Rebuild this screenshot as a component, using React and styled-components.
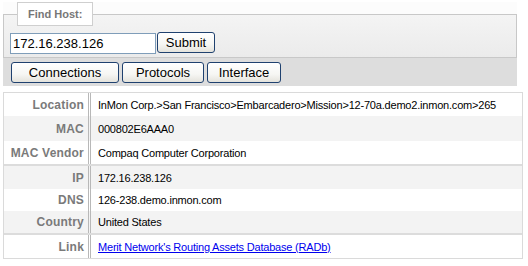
import React from "react";
import styled, { createGlobalStyle } from "styled-components";

const GlobalStyle = createGlobalStyle`
  body {
    margin: 0;
    background: #fff;
    font-family: "Liberation Sans", Arial, sans-serif;
  }
`;

const Page = styled.div`
  padding: 0 6px 0 3px;
`;

const Header = styled.div`
  width: 514px;
  background: #fcfcfc;
`;

const SearchSet = styled.fieldset`
  margin: 2px 0 0 0;
  padding: 0 6px 3px 6px;
  border: 1px solid #c8c8c8;
  background: linear-gradient(#f4f4f4, #ebebeb);
`;

const Legend = styled.legend`
  margin-left: 7px;
  padding: 0 10px;
  height: 22px;
  line-height: 22px;
  background: #fff;
  border: 1px solid #cfcfcf;
  font-size: 11px;
  font-weight: bold;
  color: #777;
`;

const SearchRow = styled.div`
  display: flex;
  align-items: center;
  padding-top: 7px;
`;

const HostInput = styled.input`
  box-sizing: border-box;
  width: 146px;
  height: 21px;
  padding: 0 2px;
  border: 1px solid #7f9db9;
  font-family: "Liberation Sans", Arial, sans-serif;
  font-size: 13px;
  color: #000;
  background: #fff;
  outline: none;
`;

const Button = styled.button`
  box-sizing: border-box;
  width: ${(p) => p.$w}px;
  height: 21px;
  margin: 0;
  padding: 0;
  border: 1px solid #1f416f;
  border-radius: 3px;
  background: linear-gradient(#ffffff 0%, #f6f6f3 60%, #e4e3dc 100%);
  font-family: "Liberation Sans", Arial, sans-serif;
  font-size: 13px;
  color: #000;
`;

const SubmitButton = styled(Button)`
  margin-left: 1px;
  margin-top: -2px;
`;

const TabBar = styled.div`
  display: flex;
  gap: 3px;
  height: 28px;
  box-sizing: border-box;
  padding: 4px 8px 0;
  background: #dddddd;
`;

const InfoBox = styled.div`
  margin-top: 6px;
  width: 520px;
  box-sizing: border-box;
  border: 1px solid #dadada;
  font-size: 11px;
`;

const Group = styled.div`
  & + & {
    border-top: 2px solid #dcdcdc;
  }
`;

const Row = styled.div`
  display: flex;
  height: ${(p) => p.$h}px;
  background: ${(p) => (p.$shade ? "#f3f3f3" : "#fff")};
`;

const Label = styled.div`
  box-sizing: border-box;
  flex: 0 0 87px;
  display: flex;
  align-items: center;
  justify-content: flex-end;
  padding-right: 4px;
  font-size: 12px;
  font-weight: bold;
  letter-spacing: 0.2px;
  color: #7a7a7a;
  white-space: nowrap;
  border-right: 3px double #b8b8b8;
`;

const Value = styled.div`
  display: flex;
  align-items: center;
  padding-left: 7px;
  color: #000;
  letter-spacing: -0.2px;
  white-space: nowrap;
`;

const Link = styled.a`
  color: #0000ee;
  text-decoration: underline;
`;

const groups = [
  [
    { label: "Location", h: 23, value: "InMon Corp.>San Francisco>Embarcadero>Mission>12-70a.demo2.inmon.com>265" },
    { label: "MAC", h: 25, value: "000802E6AAA0", shade: true },
    { label: "MAC Vendor", h: 23, value: "Compaq Computer Corporation" },
  ],
  [
    { label: "IP", h: 23, value: "172.16.238.126", shade: true },
    { label: "DNS", h: 22, value: "126-238.demo.inmon.com" },
    { label: "Country", h: 22, value: "United States", shade: true },
  ],
  [
    {
      label: "Link",
      h: 23,
      value: <Link href="#">Merit Network's Routing Assets Database (RADb)</Link>,
    },
  ],
];

export default function App() {
  return (
    <Page>
      <GlobalStyle />
      <Header>
        <SearchSet>
          <Legend>Find Host:</Legend>
          <SearchRow>
            <HostInput defaultValue="172.16.238.126" />
            <SubmitButton $w={58}>Submit</SubmitButton>
          </SearchRow>
        </SearchSet>
        <TabBar>
          <Button $w={108}>Connections</Button>
          <Button $w={82}>Protocols</Button>
          <Button $w={74}>Interface</Button>
        </TabBar>
      </Header>
      <InfoBox>
        {groups.map((rows, i) => (
          <Group key={i}>
            {rows.map((r) => (
              <Row key={r.label} $h={r.h} $shade={r.shade}>
                <Label>{r.label}</Label>
                <Value>{r.value}</Value>
              </Row>
            ))}
          </Group>
        ))}
      </InfoBox>
    </Page>
  );
}
